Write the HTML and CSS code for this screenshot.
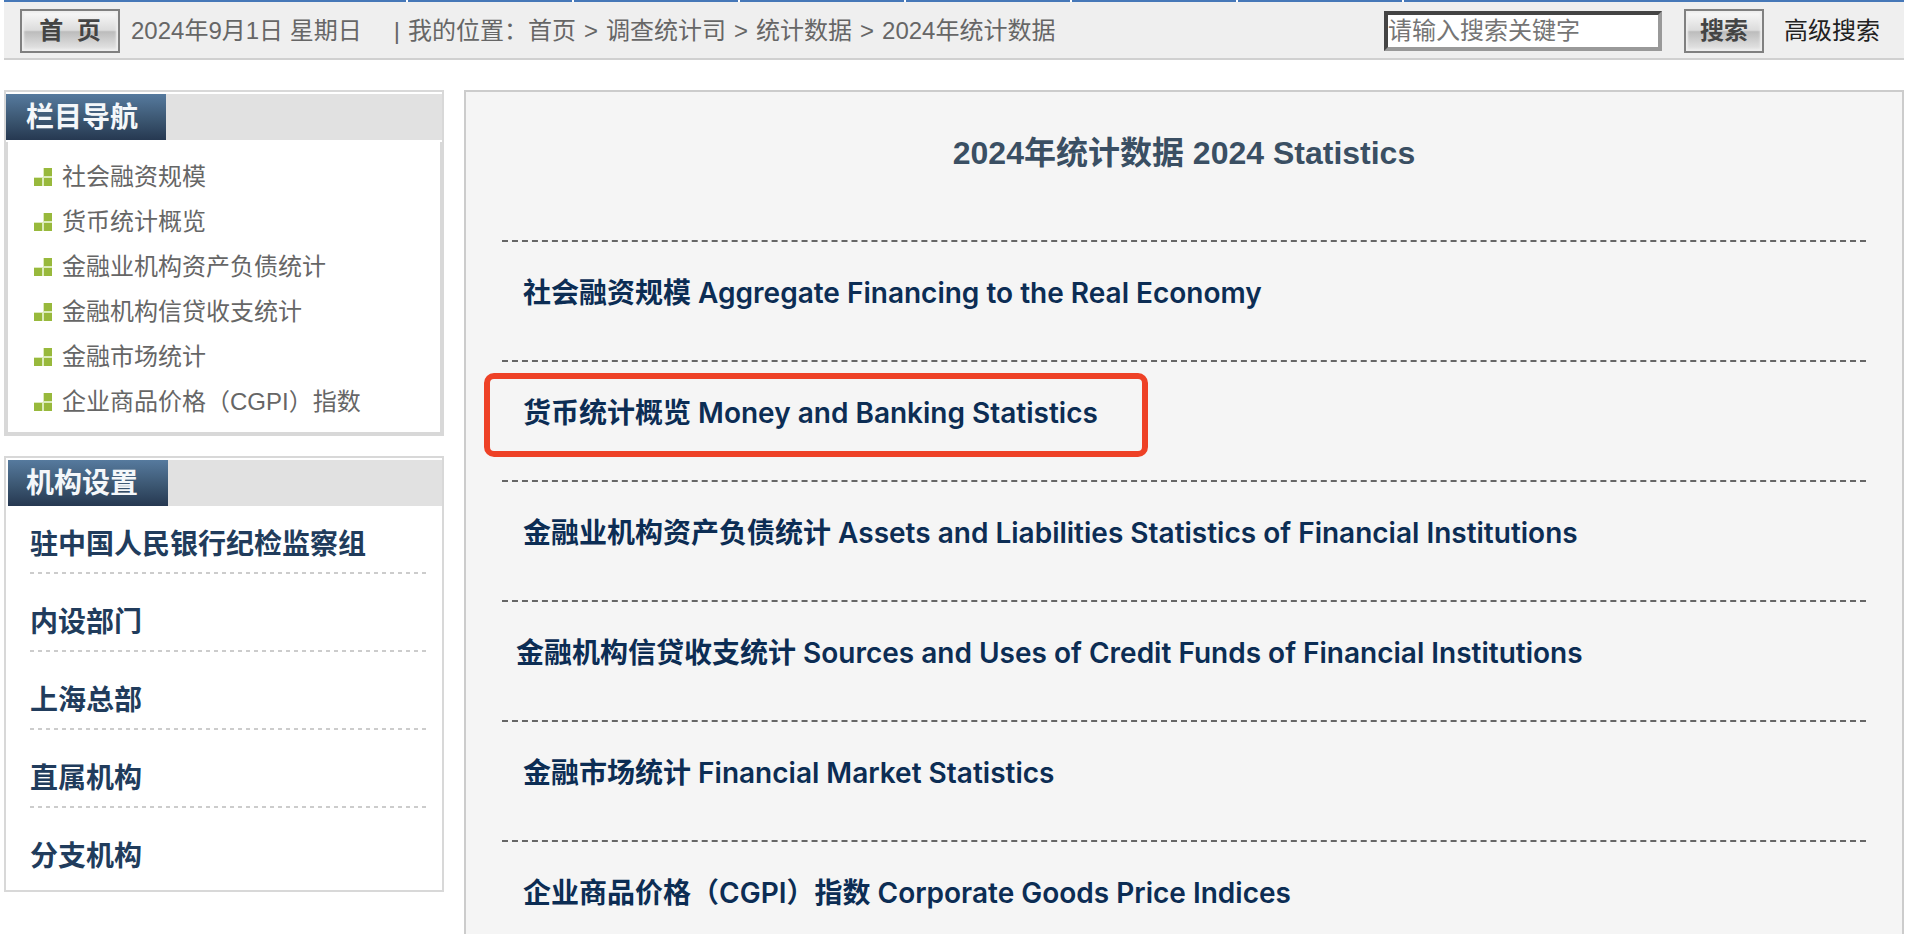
FILE: index.html
```html
<!DOCTYPE html>
<html lang="zh-CN">
<head>
<meta charset="utf-8">
<title>2024年统计数据</title>
<link rel="stylesheet" href="styles.css">
</head>
<body>
<svg class="defs" aria-hidden="true">
  <symbol id="blocks" viewBox="0 0 18 18">
    <path fill="#dcebbb" d="M9 0h9v18H0V9h9z"/>
    <path fill="#98b93c" d="M10 0h8v8h-8zM0 10h8v8H0zM10 10h8v8h-8z"/>
  </symbol>
</svg>
<div class="menu-strip"><i class="wide"></i><i></i><i></i><i></i><i></i><i></i><i></i><i class="rest"></i></div>
<header class="bar">
  <button class="metal home" type="button">首&nbsp;&nbsp;页</button>
  <span class="date">2024年9月1日 星期日</span>
  <nav class="crumbs">
    <span>|</span><span class="place">我的位置：</span><a href="#">首页</a><span>&gt;</span><a href="#">调查统计司</a><span>&gt;</span><a href="#">统计数据</a><span>&gt;</span><a href="#">2024年统计数据</a>
  </nav>
  <form class="search">
    <input type="text" aria-label="搜索" placeholder="请输入搜索关键字">
    <button class="metal" type="button">搜索</button>
    <a href="#">高级搜索</a>
  </form>
</header>
<div class="columns">
  <aside class="side">
    <section class="box">
      <h2 class="box-head"><span>栏目导航</span></h2>
      <ul class="topics">
        <li><svg><use href="#blocks"/></svg><a href="#">社会融资规模</a></li>
        <li><svg><use href="#blocks"/></svg><a href="#">货币统计概览</a></li>
        <li><svg><use href="#blocks"/></svg><a href="#">金融业机构资产负债统计</a></li>
        <li><svg><use href="#blocks"/></svg><a href="#">金融机构信贷收支统计</a></li>
        <li><svg><use href="#blocks"/></svg><a href="#">金融市场统计</a></li>
        <li><svg><use href="#blocks"/></svg><a href="#">企业商品价格（CGPI）指数</a></li>
      </ul>
    </section>
    <section class="box">
      <h2 class="box-head inset"><span>机构设置</span></h2>
      <ul class="orgs">
        <li><a href="#">驻中国人民银行纪检监察组</a></li>
        <li><a href="#">内设部门</a></li>
        <li><a href="#">上海总部</a></li>
        <li><a href="#">直属机构</a></li>
        <li><a href="#">分支机构</a></li>
      </ul>
    </section>
  </aside>
  <main class="content">
    <h1>2024年统计数据 2024 Statistics</h1>
    <ul class="reports">
      <li><a href="#">&nbsp;社会融资规模 Aggregate Financing to the Real Economy</a></li>
      <li><a class="marked" href="#">&nbsp;货币统计概览 Money and Banking Statistics</a></li>
      <li><a href="#">&nbsp;金融业机构资产负债统计 Assets and Liabilities Statistics of Financial Institutions</a></li>
      <li><a href="#">金融机构信贷收支统计 Sources and Uses of Credit Funds of Financial Institutions</a></li>
      <li><a href="#">&nbsp;金融市场统计 Financial Market Statistics</a></li>
      <li><a href="#">&nbsp;企业商品价格（CGPI）指数 Corporate Goods Price Indices</a></li>
    </ul>
  </main>
</div>
</body>
</html>
```
FILE: styles.css
```css
* { box-sizing: border-box; }
html, body { height: 100%; }
body {
  display: flex;
  flex-direction: column;
  margin: 0;
  padding: 0 10px 0 4px;
  overflow: hidden;
  background: #fff;
  color: #666;
  font: 24px/36px "Liberation Sans", "Noto Sans CJK SC", sans-serif;
}
a { color: inherit; text-decoration: none; }
ul, h1, h2 { margin: 0; padding: 0; list-style: none; }
.defs { position: absolute; width: 0; height: 0; }

.menu-strip { display: flex; gap: 2px; height: 2px; flex: none; }
.menu-strip i { width: 164px; background: #4678b8; }
.menu-strip .wide { width: 402px; }
.menu-strip .rest { flex: 1; }

.bar {
  display: flex;
  align-items: center;
  flex: none;
  height: 58px;
  padding: 2px 24px 0 16px;
  border-bottom: 2px solid #d0d0d0;
  background: #efefef;
  white-space: nowrap;
}
.metal {
  height: 44px;
  padding: 0;
  border: 2px solid #808080;
  border-radius: 0;
  box-shadow: inset 0 0 2px 2px #eee;
  background: linear-gradient(#fafafa, #dcdcdc 48%, #bcbcbc 52%, #e8e8e8);
  color: #444;
  font: bold 24px/36px "Liberation Sans", "Noto Sans CJK SC", sans-serif;
}
.home { width: 100px; margin-right: 11px; }
.date { margin-right: 32px; }
.crumbs { display: flex; gap: 8px; }
.place { margin-right: -8px; }
.search { display: flex; align-items: center; margin-left: auto; color: #222; }
.search input {
  width: 278px;
  height: 40px;
  margin-right: 22px;
  padding: 0;
  border: 4px solid;
  border-color: #444 #999 #999 #444;
  border-radius: 0;
  background: #fff;
  font: inherit;
}
.search input::placeholder { color: #757575; }
.search .metal { width: 80px; margin-right: 20px; }

.columns { display: flex; gap: 20px; flex: 1; padding-top: 30px; }
.side { width: 440px; flex: none; }
.box { margin-bottom: 20px; padding-top: 2px; border: 2px solid #d8d8d8; }
.box-head { height: 46px; background: #e1e1e1; color: #f4f7fa; font-size: 28px; line-height: 44px; }
.box-head span {
  display: block;
  width: 160px;
  padding: 2px 0 0 20px;
  background: linear-gradient(#567a9e, #3c5772 55%, #263851);
}
.inset { border-left: 2px solid #fff; }
.inset span { padding-left: 18px; }
.topics {
  margin-top: 2px;
  padding: 12px 26px 8px;
  border: 2px solid #d8d8d8;
  border-top: 0;
}
.topics li { display: flex; align-items: center; gap: 10px; height: 45px; }
.topics svg { width: 18px; height: 18px; }
.orgs { display: flex; flex-direction: column; gap: 32px; padding: 22px 14px 6px 24px; }
.orgs li {
  padding-bottom: 12px;
  background: repeating-linear-gradient(90deg, #ccc 0 4px, transparent 4px 8px) 0 100% / 100% 2px no-repeat;
  color: #213c5c;
  font-size: 28px;
  font-weight: bold;
  line-height: 34px;
}
.orgs li:last-child { padding-bottom: 10px; background: none; }

.content {
  flex: 1;
  padding: 37px 36px 0;
  border: 2px solid #ccc;
  border-bottom: 0;
  background: #f5f5f5;
}
h1 { margin-bottom: 63px; color: #3a4f63; font-size: 32px; line-height: 48px; text-align: center; }
.reports li { height: 120px; padding: 30px 14px; border-top: 2px dashed #666; }
.reports a {
  position: relative;
  display: inline-block;
  color: #0c2d54;
  font-family: Inter, "Noto Sans CJK SC", sans-serif;
  font-size: 28px;
  font-weight: 600;
  line-height: 42px;
}
.marked::after {
  content: "";
  position: absolute;
  top: -19px;
  right: -50px;
  bottom: -23px;
  left: -32px;
  border: 6px solid #ee4126;
  border-radius: 10px;
}
```
